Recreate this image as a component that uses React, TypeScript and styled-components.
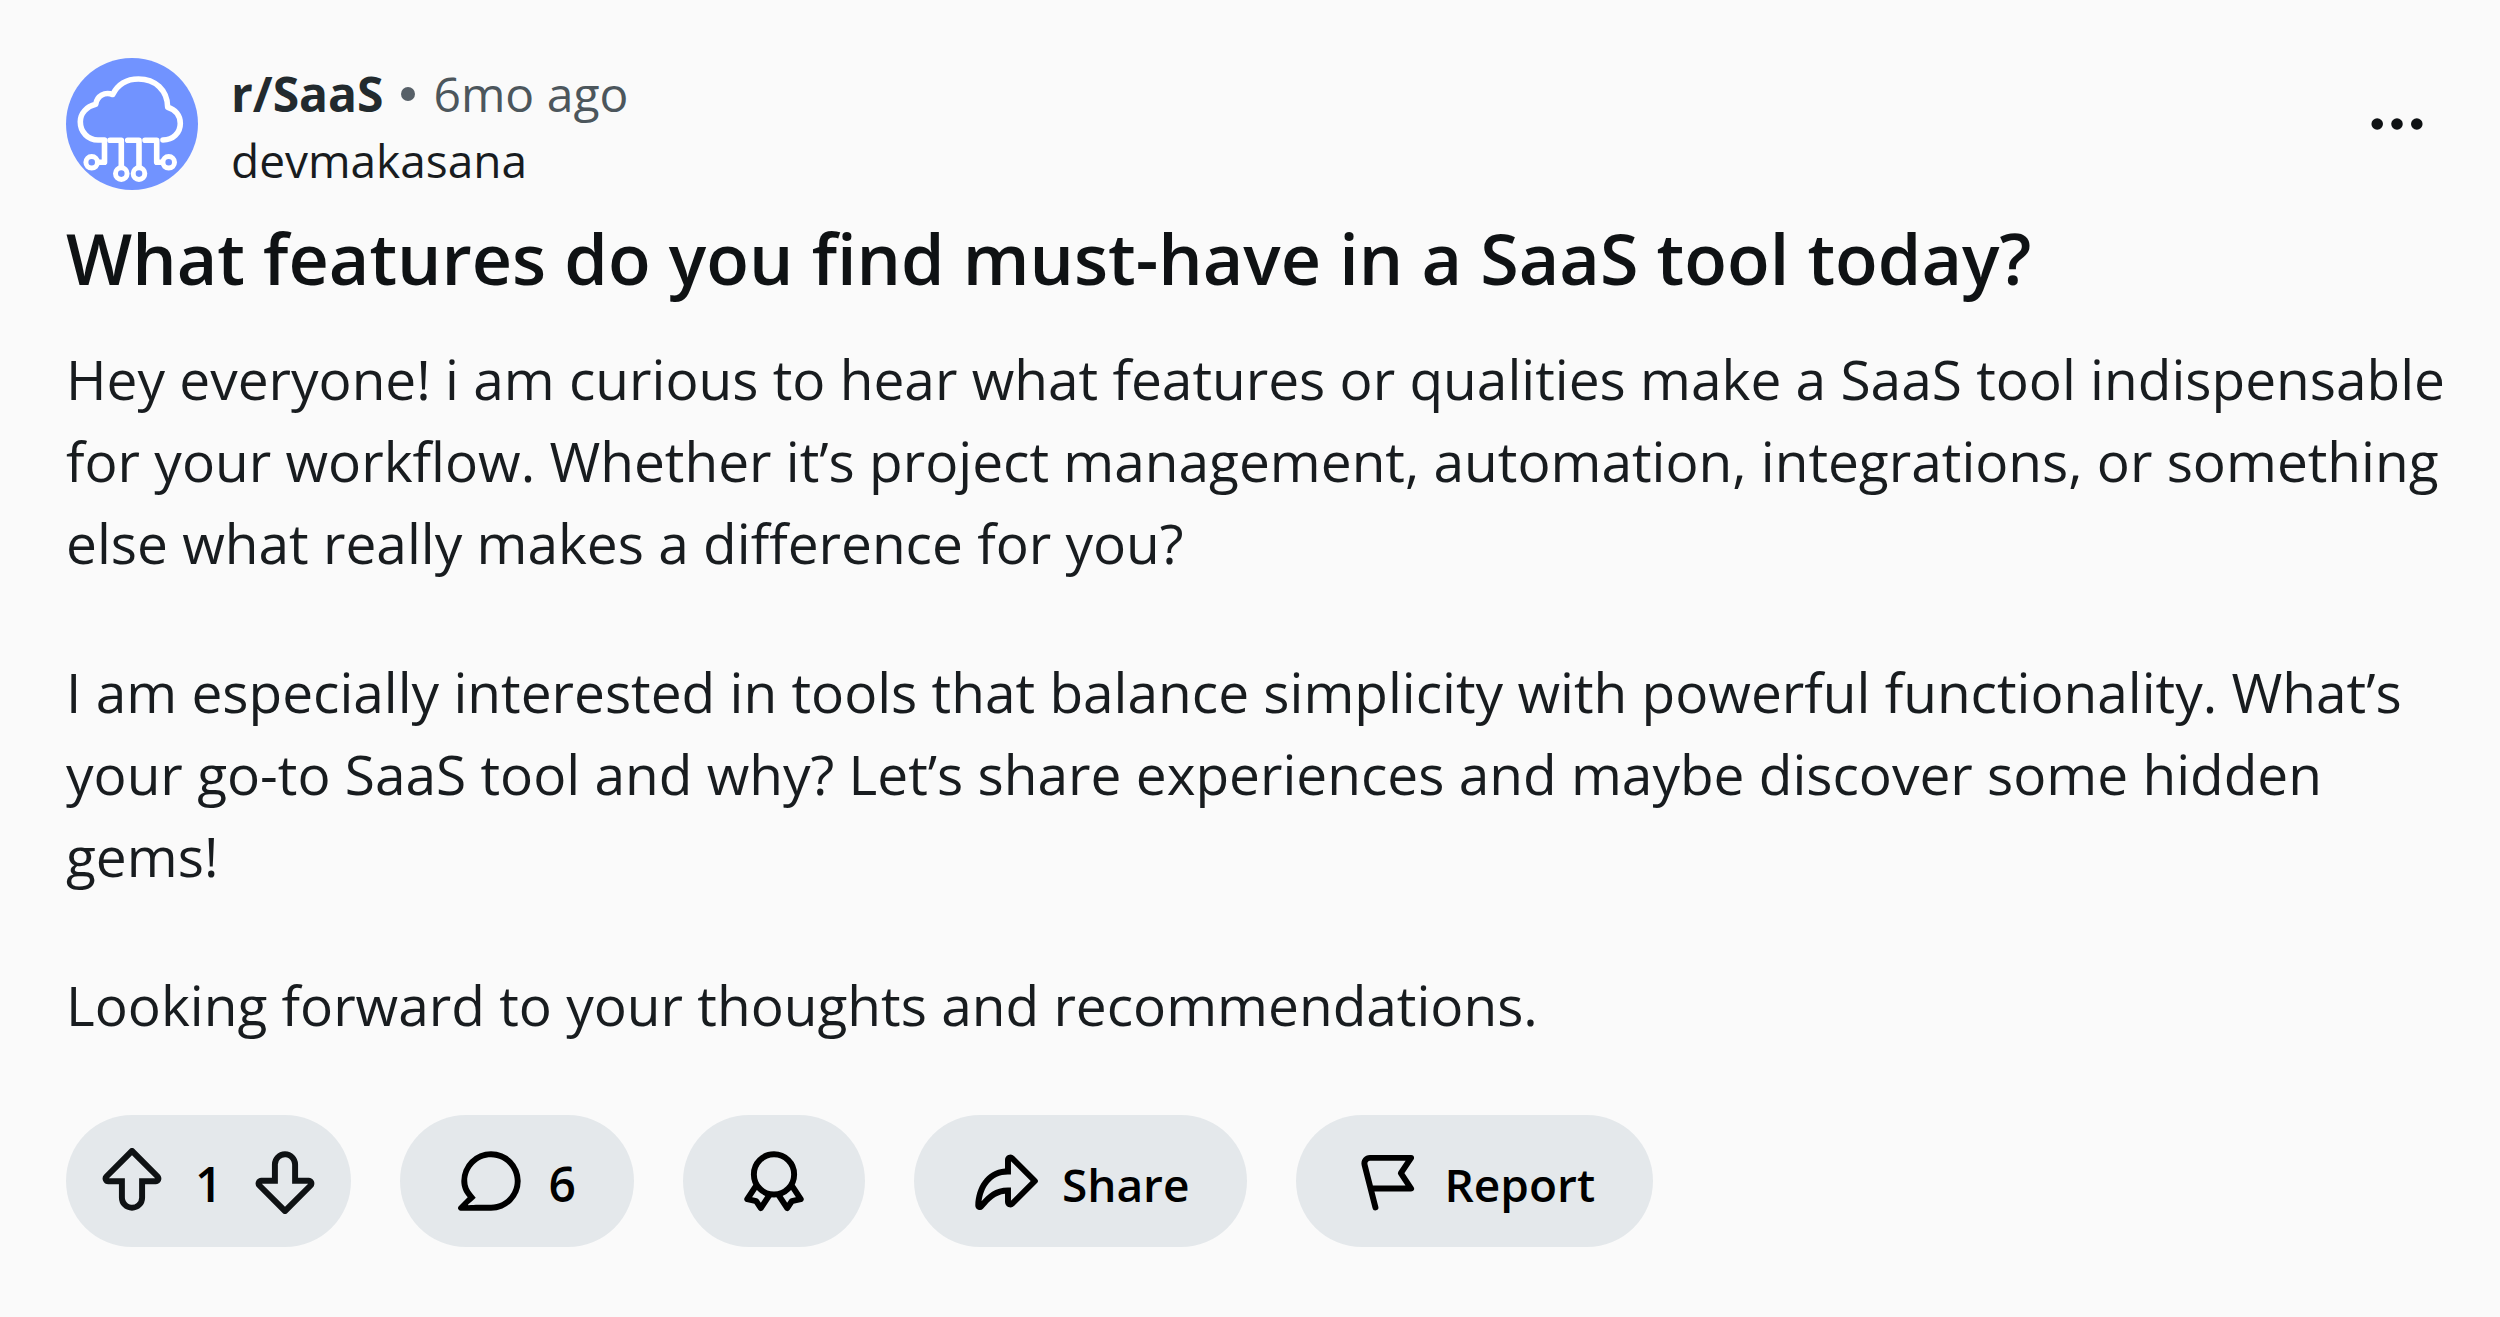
import React from 'react';
import styled, { createGlobalStyle } from 'styled-components';

const GlobalStyle = createGlobalStyle`
  *, *::before, *::after {
    box-sizing: border-box;
  }
  body {
    margin: 0;
    background: #fafafa;
    font-family: 'Open Sans', 'Noto Sans', sans-serif;
    color: #181c1f;
  }
`;

const Post = styled.article`
  display: flex;
  flex-direction: column;
  padding: 55px 50px 72px 66px;
`;

const Header = styled.header`
  display: flex;
  align-items: center;
  gap: 33px;
  padding-right: 20px;
`;

const Avatar = styled.svg`
  flex: none;
  width: 132px;
  height: 132px;
`;

const Credit = styled.div`
  display: flex;
  flex-direction: column;
  flex: 1;
  padding-top: 6px;
  font-size: 48px;
  line-height: 66px;
`;

const Origin = styled.div`
  display: flex;
  align-items: center;
  gap: 18px;
`;

const Community = styled.a`
  color: #222a2e;
  font-weight: 700;
  text-decoration: none;
`;

const Dot = styled.span`
  width: 14px;
  height: 14px;
  border-radius: 50%;
  background: #576068;
`;

const Age = styled.time`
  color: #4c565c;
`;

const Author = styled.a`
  align-self: flex-start;
  color: #181c1f;
  font-size: 46px;
  text-decoration: none;
`;

const MenuButton = styled.button`
  display: flex;
  padding: 0;
  border: 0;
  background: none;
  color: #0f1214;
`;

const Title = styled.h1`
  margin: 15px 0 0;
  color: #0f1214;
  font-size: 70px;
  font-weight: 600;
  line-height: 100px;
`;

const Body = styled.div`
  display: flex;
  flex-direction: column;
  gap: 67px;
  margin-top: 30px;
  font-size: 55px;
  line-height: 82px;
`;

const Paragraph = styled.p`
  margin: 0;
`;

const Actions = styled.footer`
  display: flex;
  gap: 49px;
  margin-top: 69px;
  color: #000;
  font-size: 46px;
  font-weight: 600;
  line-height: 66px;
`;

const Votes = styled.div`
  display: flex;
  align-items: center;
  gap: 30px;
  height: 132px;
  padding: 0 33px;
  border-radius: 66px;
  background: #e4e8eb;
`;

const VoteButton = styled.button`
  display: flex;
  padding: 0;
  border: 0;
  background: none;
  color: #0f1214;
`;

const Pill = styled.button`
  display: flex;
  align-items: center;
  gap: 24px;
  height: 132px;
  padding: 0 58px;
  border: 0;
  border-radius: 66px;
  background: #e4e8eb;
  color: inherit;
  font: inherit;
`;

const Label = styled.span`
  padding-top: 6px;
`;

const Count = styled(Label)`
  min-width: 27px;
  font-size: 48px;
  text-align: center;
`;

const Icon = styled.svg`
  flex: none;
  width: 66px;
  height: 66px;
`;

const Glyph = ({ d }: { d: string }) => (
  <Icon viewBox="0 0 20 20" fill="currentColor" aria-hidden="true">
    <path d={d} />
  </Icon>
);

const UPVOTE =
  'M10 19a3.966 3.966 0 01-3.96-3.962V10.98H2.838a1.731 1.731 0 01-1.605-1.073 1.734 1.734 0 01.377-1.895L9.364.254a.925.925 0 011.272 0l7.754 7.759c.498.499.646 1.242.376 1.894-.27.652-.9 1.073-1.605 1.073h-3.202v4.058A3.965 3.965 0 019.999 19H10zM2.989 9.179H7.84v5.731c0 1.13.81 2.163 1.934 2.278a2.163 2.163 0 002.386-2.15V9.179h4.851L10 2.163 2.989 9.179z';
const DOWNVOTE =
  'M10 1a3.966 3.966 0 013.96 3.962V9.02h3.202c.706 0 1.335.42 1.605 1.073.27.652.122 1.396-.377 1.895l-7.754 7.759a.925.925 0 01-1.272 0L1.61 11.987a1.734 1.734 0 01-.376-1.894c.27-.652.9-1.073 1.605-1.073h3.202V4.962A3.965 3.965 0 0110 1zm7.01 9.82h-4.85V5.09c0-1.13-.81-2.163-1.934-2.278a2.163 2.163 0 00-2.386 2.15v5.859H2.989l7.01 7.016 7.012-7.016z';
const COMMENT =
  'M10 1a9 9 0 00-9 9c0 1.947.79 3.58 1.935 4.957L.231 17.661A.784.784 0 00.785 19H10a9 9 0 009-9 9 9 0 00-9-9zm0 16.2H6.162c-.994.004-1.907.053-3.045.144l-.076-.188a36.981 36.981 0 002.328-2.087l-1.05-1.263C3.297 12.576 2.8 11.331 2.8 10c0-3.97 3.23-7.2 7.2-7.2s7.2 3.23 7.2 7.2-3.23 7.2-7.2 7.2z';
const SHARE =
  'M12.8 17.524l6.89-6.887a.9.9 0 000-1.273L12.8 2.477a1.64 1.64 0 00-1.782-.349 1.64 1.64 0 00-1.014 1.518v2.593C4.054 6.728 1.192 12.075 1 17.376a1.353 1.353 0 00.862 1.32 1.35 1.35 0 001.531-.364l.334-.381c1.705-1.944 3.323-3.791 6.277-4.103v2.509c0 .667.398 1.262 1.014 1.518a1.638 1.638 0 001.783-.349v-.002zm-.994-1.548V12h-.9c-3.969 0-6.162 2.1-8.001 4.161.514-4.011 2.823-8.16 8-8.16h.9V4.024L17.784 10l-5.977 5.976z';

const CloudLogo = () => (
  <Avatar viewBox="0 0 132 132" role="img" aria-label="SaaS community">
    <circle cx="66" cy="66" r="66" fill="#7193ff" />
    <g fill="none" stroke="#fff" strokeWidth="5.6" strokeLinecap="round" strokeLinejoin="round">
      <path d="M97 82C107 82 114.300 75 114.300 65.500C114.300 57 109 51.500 101.700 49.300C101.500 32 89 21 72.500 21C60.500 21 51.500 27 46.700 36.500C38.500 33.500 31 38 29.700 46.300C20.500 48.500 14.300 55.500 14.300 63.700C14.300 74 22 82 32 82H38.500V104.300H33" />
      <path d="M44 82.300H55.300V108M61.700 82.300H73V108M79 82.300H90.700V104.300H96" />
    </g>
    <g fill="none" stroke="#fff" strokeWidth="5">
      <circle cx="25.700" cy="104.300" r="5.800" />
      <circle cx="55.300" cy="115.600" r="5.800" />
      <circle cx="73" cy="115.600" r="5.800" />
      <circle cx="102.700" cy="104.300" r="5.800" />
    </g>
  </Avatar>
);

const Award = () => (
  <Icon viewBox="0 0 20 20" fill="none" stroke="currentColor" strokeWidth="1.8" strokeLinejoin="round" aria-hidden="true">
    <circle cx="10" cy="8" r="6.1" />
    <path d="M4.600 11.400L1.900 15.500L4.600 16.100L6 18.200L8.600 14.300M15.400 11.400L18.100 15.500L15.400 16.100L14 18.200L11.400 14.300" />
  </Icon>
);

const Flag = () => (
  <Icon viewBox="0 0 20 20" fill="none" stroke="currentColor" strokeWidth="1.8" strokeLinecap="round" strokeLinejoin="round" aria-hidden="true">
    <path d="M6.500 18L3.200 5.100A1.700 1.700 0 014.900 3H17.300L14.200 7.600L17.300 12.300H5.200" />
  </Icon>
);

const More = () => (
  <Icon viewBox="0 0 20 20" fill="currentColor" aria-hidden="true">
    <circle cx="4" cy="10" r="1.75" />
    <circle cx="10" cy="10" r="1.75" />
    <circle cx="16" cy="10" r="1.75" />
  </Icon>
);

export default function App() {
  return (
    <>
      <GlobalStyle />
      <Post>
        <Header>
          <CloudLogo />
          <Credit>
            <Origin>
              <Community href="#saas">r/SaaS</Community>
              <Dot />
              <Age>6mo ago</Age>
            </Origin>
            <Author href="#devmakasana">devmakasana</Author>
          </Credit>
          <MenuButton type="button" aria-label="More options">
            <More />
          </MenuButton>
        </Header>
        <Title>What features do you find must-have in a SaaS tool today?</Title>
        <Body>
          <Paragraph>
            Hey everyone! i am curious to hear what features or qualities make a SaaS tool indispensable
            for your workflow. Whether it’s project management, automation, integrations, or something
            else what really makes a difference for you?
          </Paragraph>
          <Paragraph>
            I am especially interested in tools that balance simplicity with powerful functionality. What’s
            your go-to SaaS tool and why? Let’s share experiences and maybe discover some hidden gems!
          </Paragraph>
          <Paragraph>Looking forward to your thoughts and recommendations.</Paragraph>
        </Body>
        <Actions>
          <Votes>
            <VoteButton type="button" aria-label="Upvote">
              <Glyph d={UPVOTE} />
            </VoteButton>
            <Count>1</Count>
            <VoteButton type="button" aria-label="Downvote">
              <Glyph d={DOWNVOTE} />
            </VoteButton>
          </Votes>
          <Pill type="button">
            <Glyph d={COMMENT} />
            <Count>6</Count>
          </Pill>
          <Pill type="button" aria-label="Give award">
            <Award />
          </Pill>
          <Pill type="button">
            <Glyph d={SHARE} />
            <Label>Share</Label>
          </Pill>
          <Pill type="button">
            <Flag />
            <Label>Report</Label>
          </Pill>
        </Actions>
      </Post>
    </>
  );
}
